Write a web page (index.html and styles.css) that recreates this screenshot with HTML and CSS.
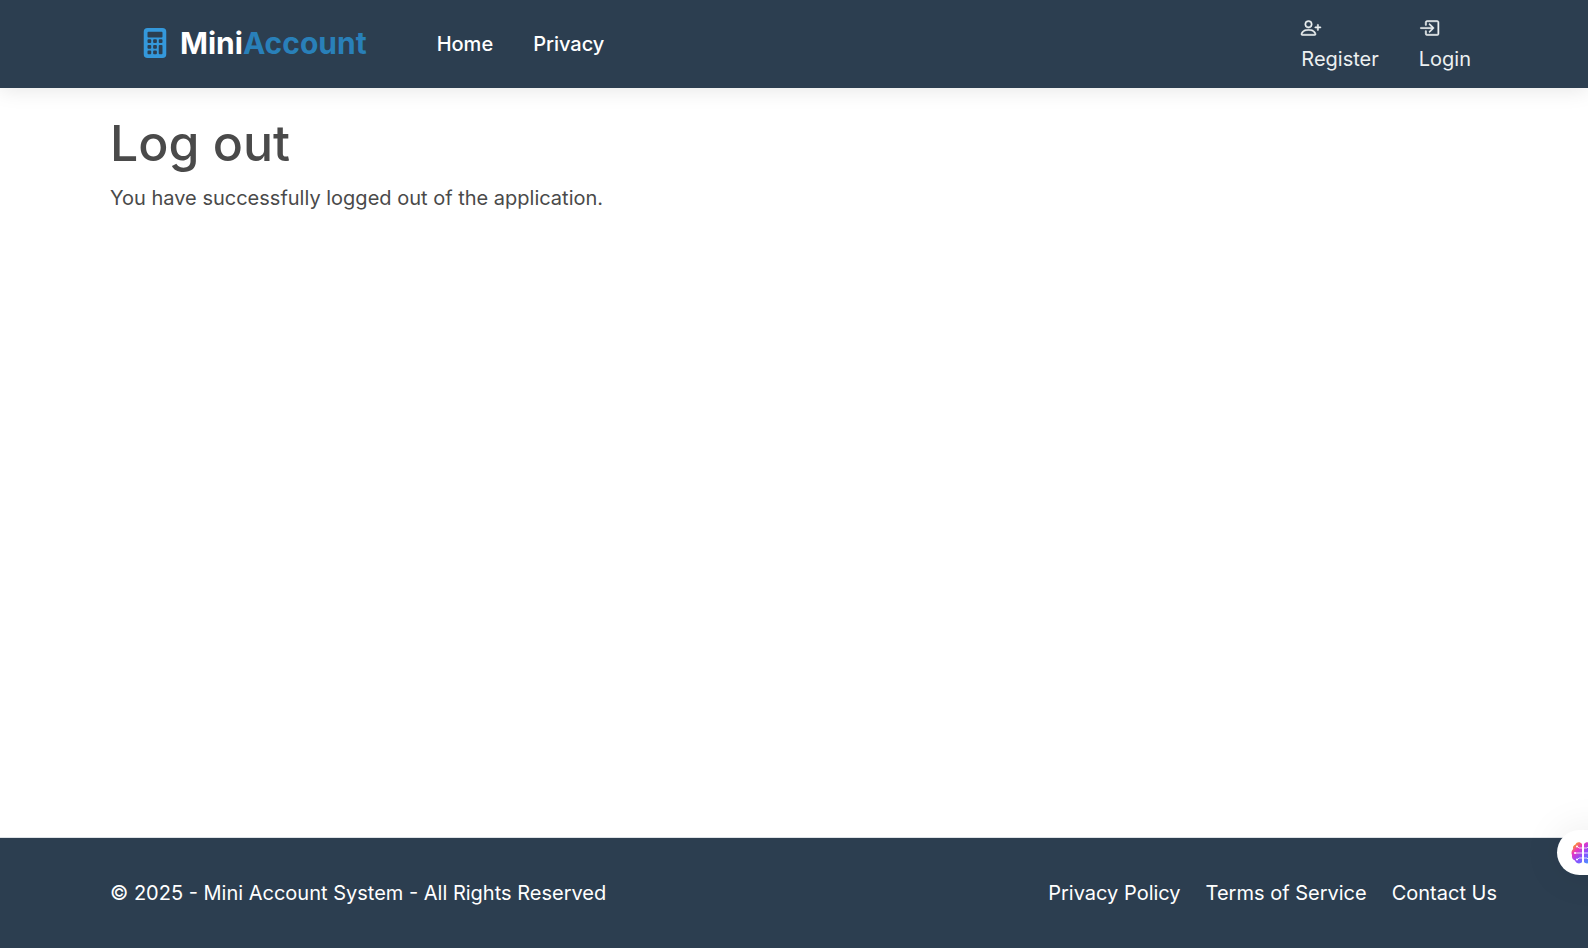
FILE: index.html
```
<!DOCTYPE html>
<html lang="en">
<head>
<meta charset="utf-8">
<title>Log out - Mini Account System</title>
<link rel="stylesheet" href="styles.css">
</head>
<body>
<header class="site-header">
  <nav class="navbar" aria-label="Main">
    <a class="brand" href="#">
      <svg class="brand-icon" viewBox="0 0 16 16" aria-hidden="true"><path fill-rule="evenodd" d="M4 0h8a2 2 0 0 1 2 2v12a2 2 0 0 1-2 2H4a2 2 0 0 1-2-2V2a2 2 0 0 1 2-2m0 2.500v2a.5.5 0 0 0 .5.5h7a.5.5 0 0 0 .5-.5v-2a.5.5 0 0 0-.5-.5h-7a.5.5 0 0 0-.5.5m0 4v1a.5.5 0 0 0 .5.5h1a.5.5 0 0 0 .5-.5v-1a.5.5 0 0 0-.5-.5h-1a.5.5 0 0 0-.5.5M4.500 9a.5.5 0 0 0-.5.5v1a.5.5 0 0 0 .5.5h1a.5.5 0 0 0 .5-.5v-1a.5.5 0 0 0-.5-.5zM4 12.500v1a.5.5 0 0 0 .5.5h1a.5.5 0 0 0 .5-.5v-1a.5.5 0 0 0-.5-.5h-1a.5.5 0 0 0-.5.5M7.500 6a.5.5 0 0 0-.5.5v1a.5.5 0 0 0 .5.5h1a.5.5 0 0 0 .5-.5v-1a.5.5 0 0 0-.5-.5zM7 9.500v1a.5.5 0 0 0 .5.5h1a.5.5 0 0 0 .5-.5v-1a.5.5 0 0 0-.5-.5h-1a.5.5 0 0 0-.5.5m.5 2.500a.5.5 0 0 0-.5.5v1a.5.5 0 0 0 .5.5h1a.5.5 0 0 0 .5-.5v-1a.5.5 0 0 0-.5-.5zM10 6.500v1a.5.5 0 0 0 .5.5h1a.5.5 0 0 0 .5-.5v-1a.5.5 0 0 0-.5-.5h-1a.5.5 0 0 0-.5.5m.5 2.500a.5.5 0 0 0-.5.5v4a.5.5 0 0 0 .5.5h1a.5.5 0 0 0 .5-.5v-4a.5.5 0 0 0-.5-.5z"/></svg>
      <span class="brand-name">Mini<span class="brand-accent">Account</span></span>
    </a>
    <div class="nav-main">
      <a href="#">Home</a>
      <a href="#">Privacy</a>
    </div>
    <div class="nav-account">
      <a href="#">
        <svg viewBox="0 0 16 16" aria-hidden="true"><path d="M6 8a3 3 0 1 0 0-6 3 3 0 0 0 0 6m2-3a2 2 0 1 1-4 0 2 2 0 0 1 4 0m4 8c0 1-1 1-1 1H1s-1 0-1-1 1-4 6-4 6 3 6 4m-1-.004c-.001-.246-.154-.986-.832-1.664C9.516 10.680 8.289 10 6 10s-3.516.68-4.168 1.332c-.678.678-.83 1.418-.832 1.664z"/><path d="M13.500 5a.5.5 0 0 1 .5.5V7h1.500a.5.5 0 0 1 0 1H14v1.500a.5.5 0 0 1-1 0V8h-1.500a.5.5 0 0 1 0-1H13V5.500a.5.5 0 0 1 .5-.5"/></svg>
        <span>Register</span>
      </a>
      <a href="#">
        <svg viewBox="0 0 16 16" aria-hidden="true"><path d="M6 3.500a.5.5 0 0 1 .5-.5h8a.5.5 0 0 1 .5.5v9a.5.5 0 0 1-.5.5h-8a.5.5 0 0 1-.5-.5v-2a.5.5 0 0 0-1 0v2A1.500 1.500 0 0 0 6.500 14h8a1.500 1.500 0 0 0 1.500-1.500v-9A1.500 1.500 0 0 0 14.500 2h-8A1.500 1.500 0 0 0 5 3.500v2a.5.5 0 0 0 1 0z"/><path d="M11.854 8.354a.5.5 0 0 0 0-.708l-3-3a.5.5 0 1 0-.708.708L10.293 7.500H1.500a.5.5 0 0 0 0 1h8.793l-2.147 2.146a.5.5 0 0 0 .708.708z"/></svg>
        <span>Login</span>
      </a>
    </div>
  </nav>
</header>
<main class="content">
  <h1>Log out</h1>
  <p>You have successfully logged out of the application.</p>
</main>
<footer class="site-footer">
  <span>© 2025 - Mini Account System - All Rights Reserved</span>
  <nav class="footer-links" aria-label="Footer">
    <a href="#">Privacy Policy</a>
    <a href="#">Terms of Service</a>
    <a href="#">Contact Us</a>
  </nav>
</footer>
<button class="assistant" type="button" aria-label="Open assistant">
  <svg viewBox="0 0 24 24" aria-hidden="true">
    <defs><linearGradient id="brain" x1="0" y1="0" x2="1" y2="1"><stop offset=".1" stop-color="#ff9a1f"/><stop offset=".3" stop-color="#e935c1"/><stop offset=".55" stop-color="#8b4dff"/><stop offset="1" stop-color="#2bb5ff"/></linearGradient></defs>
    <path fill="url(#brain)" d="M11 3C9 .5 5.500 1 4.500 3.500 2.500 4 1.500 6 2.200 8 .5 9.500 0 12 1 14c-.5 3 1 5 3 5.500C5 22.500 9 23.500 11 21zM13 3c2-2.500 5.500-2 6.500.5 2 .5 3 2.500 2.300 4.500C23.500 9.500 24 12 23 14c.5 3-1 5-3 5.500-1 3-5 4-7 1.500z"/>
    <path fill="none" stroke="#fff" stroke-width=".8" d="M11 7H8L6 5M4 12h7M11 17H8l-2 2M13 7h3l2-2M13 12h7M13 17h3l2 2"/>
    <g fill="#fff"><circle cx="6" cy="5.500" r="1"/><circle cx="4" cy="12" r="1"/><circle cx="6" cy="18.500" r="1"/><circle cx="18" cy="5.500" r="1"/><circle cx="18" cy="18.500" r="1"/></g>
  </svg>
</button>
</body>
</html>
```
FILE: styles.css
```
* {
  box-sizing: border-box;
}

html {
  height: 100%;
}

body {
  display: flex;
  flex-direction: column;
  min-height: 100%;
  margin: 0;
  overflow-x: hidden;
  background: #fff;
  color: #4a4a4a;
  font: 400 20px/30px Inter, "Liberation Sans", sans-serif;
}

a {
  color: inherit;
  text-decoration: none;
}

.site-header {
  padding: 14px 117px 14px 140px;
  background: #2c3e50;
  box-shadow: 0 2px 20px rgba(0, 0, 0, 0.1);
}

.navbar {
  display: flex;
  align-items: center;
}

.brand {
  display: flex;
  align-items: center;
  gap: 10px;
  padding-bottom: 2px;
  color: #fff;
  font-size: 30px;
  font-weight: 700;
}

.brand-icon {
  width: 30px;
  height: 30px;
  fill: #3498db;
}

.brand-accent {
  color: #2980b9;
}

.nav-main {
  display: flex;
  gap: 40px;
  margin-left: 70px;
  color: #fff;
  font-weight: 500;
}

.nav-account {
  display: flex;
  gap: 40px;
  margin-left: auto;
  color: #ecf0f1;
}

.nav-account a {
  display: flex;
  flex-direction: column;
}

.nav-account svg {
  width: 20px;
  height: 20px;
  margin: 4px 0 6px;
  overflow: visible;
  fill: currentColor;
  stroke: currentColor;
  stroke-width: 0.4px;
}

.content {
  flex: 1;
  padding: 25px 110px;
}

.content h1 {
  margin: 0 0 10px;
  font-size: 50px;
  font-weight: 500;
  line-height: 60px;
}

.content p {
  margin: 0;
}

.site-footer {
  display: flex;
  align-items: center;
  justify-content: space-between;
  padding: 40px 91px 40px 110px;
  border-top: 1px solid #dee2e6;
  background: #2c3e50;
  color: #fff;
}

.footer-links {
  display: flex;
  gap: 25px;
}

.assistant {
  position: fixed;
  right: -30px;
  bottom: 73px;
  width: 61px;
  height: 45px;
  padding: 0 0 0 14px;
  border: 0;
  border-radius: 23px 0 0 23px;
  background: #fff;
  box-shadow: 0 0 40px rgba(0, 0, 0, 0.08);
}

.assistant svg {
  display: block;
  width: 24px;
  height: 24px;
}
```
